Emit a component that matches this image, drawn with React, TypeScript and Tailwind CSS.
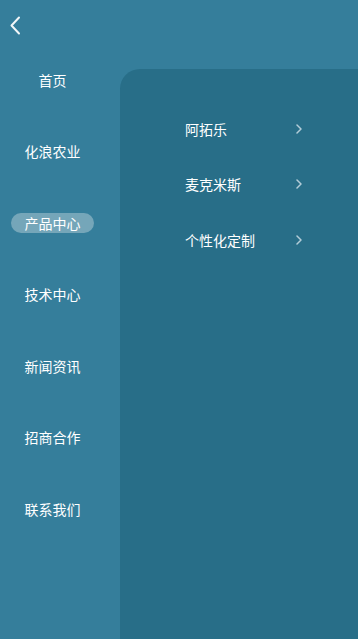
import React from "react";

const left = ["首页", "化浪农业", "产品中心", "技术中心", "新闻资讯", "招商合作", "联系我们"];
const right = ["阿拓乐", "麦克米斯", "个性化定制"];

export default function App() {
  return (
    <div
      className="w-full h-[639px] bg-[#357e9b] flex flex-col overflow-hidden text-white"
      style={{ fontFamily: '"Noto Sans CJK SC", "Noto Sans", sans-serif' }}
    >
      <div className="h-[44px] shrink-0 flex items-start pt-[16px] pl-[9px]">
        <svg width="12" height="20" viewBox="0 0 12 20" fill="none">
          <path d="M10 1.5 L2.5 9.5 L10 17.5" stroke="#f2f6f8" strokeWidth="2" strokeLinecap="round" strokeLinejoin="round" />
        </svg>
      </div>
      <div className="flex flex-1 min-h-0">
        <div className="w-[120px] shrink-0 flex flex-col">
          {left.map((t, i) => (
            <div key={t} className="h-[71.5px] flex items-center justify-center w-[105px]">
              {i === 2 ? (
                <span className="w-[83px] h-[20px] rounded-full bg-[#75a6b9] flex items-center justify-center text-[14px] leading-none">
                  {t}
                </span>
              ) : (
                <span className="text-[14px] leading-none">{t}</span>
              )}
            </div>
          ))}
        </div>
        <div className="flex-1 mt-[25px] bg-[#286e88] rounded-tl-[20px] pt-[32px] pl-[65px]">
          {right.map((t) => (
            <div key={t} className="h-[55.5px] w-[117px] flex items-center justify-between">
              <span className="text-[14px] leading-none">{t}</span>
              <svg width="6" height="10" viewBox="0 0 6 10" fill="none">
                <path d="M1 1 L5 5 L1 9" stroke="#b3cdd8" strokeWidth="1.5" strokeLinecap="round" strokeLinejoin="round" />
              </svg>
            </div>
          ))}
        </div>
      </div>
    </div>
  );
}
